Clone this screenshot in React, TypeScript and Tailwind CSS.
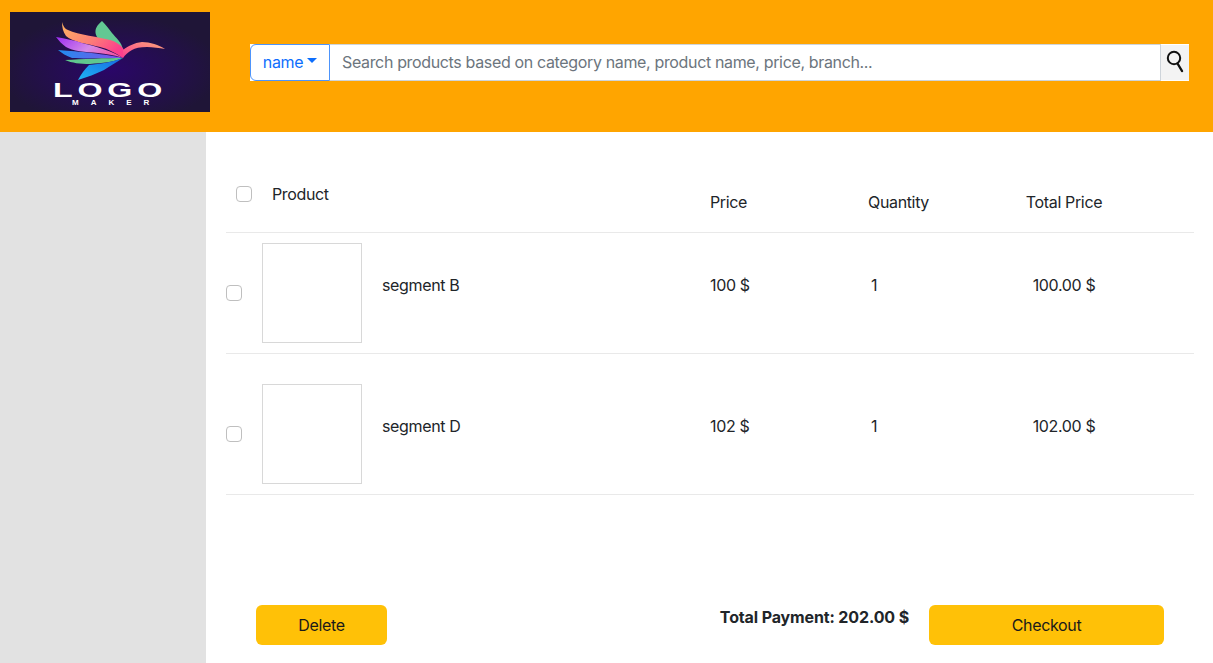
const rows = [
  { name: "segment B", price: "100 $", quantity: 1, total: "100.00 $", top: "pt-[10px]" },
  { name: "segment D", price: "102 $", quantity: 1, total: "102.00 $", top: "pt-[30px]" },
];

const columns = "grid grid-cols-[484px_158px_136px_120px]";

function Logo() {
  return (
    <svg width="200" height="100" viewBox="0 0 200 100" className="block shrink-0" role="img" aria-label="Logo Maker">
      <defs>
        <radialGradient id="bg" cx="50%" cy="58%" r="55%">
          <stop offset="0%" stopColor="#2a0668" />
          <stop offset="100%" stopColor="#1f1537" />
        </radialGradient>
        <linearGradient id="top" x1="0" y1="0" x2="1" y2="0.6">
          <stop offset="0%" stopColor="#fdb45f" />
          <stop offset="60%" stopColor="#fd7a78" />
          <stop offset="100%" stopColor="#fb3f8c" />
        </linearGradient>
        <linearGradient id="neck" x1="0" y1="1" x2="1" y2="0">
          <stop offset="0%" stopColor="#f83c90" />
          <stop offset="100%" stopColor="#fda878" />
        </linearGradient>
        <linearGradient id="violet" x1="0" y1="0" x2="1" y2="0.4">
          <stop offset="0%" stopColor="#9b2cf0" />
          <stop offset="60%" stopColor="#d58ae8" />
          <stop offset="100%" stopColor="#f05aa8" />
        </linearGradient>
        <linearGradient id="blue" x1="0" y1="0" x2="1" y2="0">
          <stop offset="0%" stopColor="#1e8ff0" />
          <stop offset="100%" stopColor="#8a4be8" />
        </linearGradient>
        <linearGradient id="tail" x1="0" y1="1" x2="1" y2="0">
          <stop offset="0%" stopColor="#1fb4f5" />
          <stop offset="100%" stopColor="#1668e0" />
        </linearGradient>
      </defs>
      <rect width="200" height="100" fill="url(#bg)" />
      {/* bird */}
      <path d="M92 9 C 86 14 82 20 90 29 L 113 38 C 112 30 106 26 102 21 C 99 17 96 13 92 9 Z" fill="#62c893" />
      <path d="M52 10 C 53 14 55 17 58 18 C 68 23 90 25 100 28 C 107 30 112 34 114 38 L 113 46 C 106 41 98 37 90 35 C 78 32 62 30 56 24 C 53 20 52 15 52 10 Z" fill="url(#top)" />
      <path d="M113 38 C 118 34 124 31 132 30 C 140 30 149 33 155 37 C 149 36 143 35 137 35 C 130 35 125 36 122 38 C 118 40 115 43 113 46 Z" fill="url(#neck)" />
      <path d="M46 25 C 56 27 64 28 72 31 C 88 35 102 39 113 46 C 104 43 96 42 88 41 C 76 40 62 39 56 35 C 52 32 49 29 46 25 Z" fill="url(#violet)" />
      <path d="M48 38 C 62 39 90 41 113 46 C 96 46 76 47 62 46 C 56 44 52 41 48 38 Z" fill="url(#blue)" />
      <path d="M55 48 C 72 47 96 46 113 46 C 104 50 92 51 80 52 C 70 52 62 51 55 48 Z" fill="#5fc88e" />
      <path d="M68 68 C 71 62 75 57 79 53 C 90 52 102 50 113 46 C 107 50 100 54 94 58 C 86 62 77 65 68 68 Z" fill="url(#tail)" />
      {/* wordmark */}
      <text x="43" y="85" textLength="114" lengthAdjust="spacingAndGlyphs" fill="#ffffff" className="font-['Liberation_Sans',sans-serif] font-bold text-[20px] tracking-[3px]">LOGO</text>
      <text x="62" y="92.5" textLength="77" lengthAdjust="spacing" fill="#ffffff" className="font-['Liberation_Sans',sans-serif] font-bold text-[8px]">MAKER</text>
    </svg>
  );
}

function Checkbox({ className = "" }: { className?: string }) {
  return (
    <input
      type="checkbox"
      className={`appearance-none w-4 h-4 shrink-0 bg-white border border-[#bfbfbf] rounded-[4px] ${className}`}
    />
  );
}

export default function App() {
  return (
    <div className="h-screen flex flex-col overflow-hidden bg-white font-['Inter',sans-serif] text-[#212529] text-base tracking-[-0.35px]">
      {/* Header */}
      <header className="h-[132px] shrink-0 bg-[#ffa500] flex items-center pl-2.5 pr-6 pb-2">
        <Logo />
        <div className="flex flex-1 h-[37px] ml-10 bg-white">
          <button className="w-20 shrink-0 flex items-center justify-center gap-1 text-[#0d6efd] bg-white border-[1.5px] border-[#4d94fb] rounded-l-md">
            name
            <span className="mb-1 w-0 h-0 border-x-[5px] border-x-transparent border-t-[5px] border-t-[#0d6efd]" />
          </button>
          <input
            className="flex-1 min-w-0 px-3 bg-white border border-[#ced4da] border-l-0 outline-none placeholder:text-[#6c757d]"
            placeholder="Search products based on category name, product name, price, branch..."
          />
          <button className="w-7 shrink-0 flex items-center justify-center bg-[#f3f3f3] border-y border-white">
            <svg width="18" height="24" viewBox="0 0 18 24" fill="none" stroke="#111111" strokeWidth="2">
              <circle cx="8" cy="8" r="6.2" />
              <path d="M11.5 13.5 L 16 21" strokeWidth="2.4" strokeLinecap="round" />
            </svg>
          </button>
        </div>
      </header>

      <div className="flex flex-1 min-h-0">
        <aside className="w-[206px] shrink-0 bg-[#e2e2e2]" />

        <main className="flex-1 min-w-0 pl-5 pr-[19px] flex flex-col">
          {/* Table head */}
          <div className={`${columns} h-[101px] border-b border-[#e9e9e9]`}>
            <div className="flex items-start gap-5 pl-2.5 pt-[50px]">
              <Checkbox className="mt-1" />
              <span>Product</span>
            </div>
            <div className="pt-[58px]">Price</div>
            <div className="pt-[58px]">Quantity</div>
            <div className="pt-[58px] text-center">Total Price</div>
          </div>

          {/* Table rows */}
          {rows.map((row) => (
            <div key={row.name} className={`${columns} ${row.top} pb-[10px] border-b border-[#e9e9e9]`}>
              <div className="flex items-center">
                <Checkbox />
                <div className="w-[100px] h-[100px] ml-5 border border-[#d8d8d8]" />
                <span className="ml-5 pb-[16px]">{row.name}</span>
              </div>
              <div className="flex items-center pb-[16px]">{row.price}</div>
              <div className="flex items-center pb-[16px] pl-[3px]">{row.quantity}</div>
              <div className="flex items-center justify-center pb-[16px]">{row.total}</div>
            </div>
          ))}

          {/* Footer */}
          <div className="flex mt-[110px] px-[30px]">
            <button className="w-[131px] h-10 bg-[#ffc107] text-[#1a1a1a] rounded-md">Delete</button>
            <span className="ml-auto font-bold tracking-[-0.13px]">Total Payment: 202.00 $</span>
            <button className="w-[235px] h-10 ml-5 bg-[#ffc107] text-[#1a1a1a] rounded-md">Checkout</button>
          </div>
        </main>
      </div>
    </div>
  );
}
